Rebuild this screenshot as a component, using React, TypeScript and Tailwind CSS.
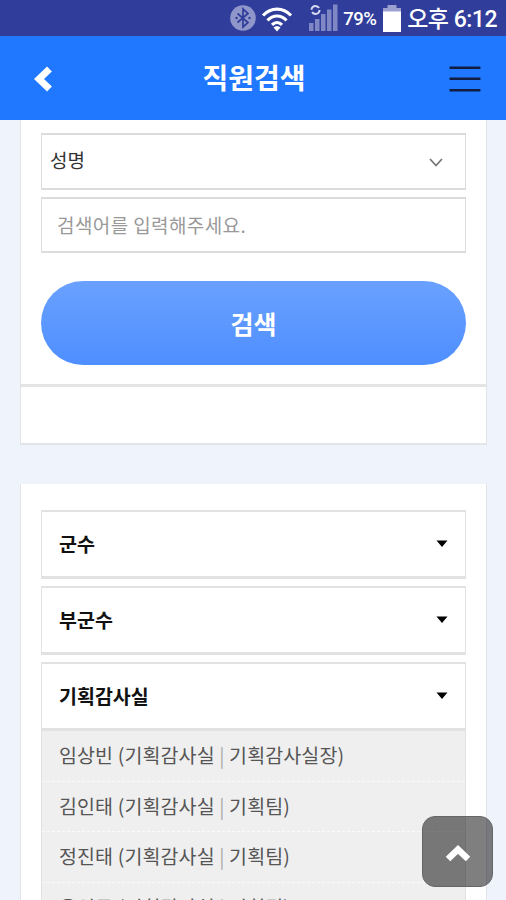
const departments = ['군수', '부군수', '기획감사실'];

const employees = [
  { name: '임상빈', dept: '기획감사실', team: '기획감사실장' },
  { name: '김인태', dept: '기획감사실', team: '기획팀' },
  { name: '정진태', dept: '기획감사실', team: '기획팀' },
  { name: '윤성국', dept: '기획감사실', team: '기획팀' },
];

const StatusBar = () => (
  <div className="h-9 shrink-0 bg-[#303d9b] flex items-center pr-[9px] justify-end text-white font-[Roboto,'Noto_Sans_CJK_KR',sans-serif]">
    <svg width="26" height="26" viewBox="0 0 26 26" className="mr-[5px]" aria-hidden="true">
      <circle cx="13" cy="13" r="12.8" fill="#8f97ca" />
      <path d="M7.500 8.500L18 17.500L13 22V4L18 8.500L7.500 17.500" fill="none" stroke="#303d9b" strokeWidth="1.700" />
      <circle cx="6.500" cy="13" r="1.200" fill="#303d9b" />
      <circle cx="19.500" cy="13" r="1.200" fill="#303d9b" />
    </svg>
    <svg width="32" height="26" viewBox="0 0 32 26" className="mr-[16px] mt-px" aria-hidden="true">
      <g fill="none" stroke="#fff" strokeWidth="3.200">
        <path d="M2 9.500C10 1 22 1 30 9.500" />
        <path d="M6.500 14.500C12 8.500 20 8.500 25.500 14.500" />
        <path d="M11 18.800C14 15.800 18 15.800 21 18.800" />
      </g>
      <path d="M12.500 21.500Q16 18.500 19.500 21.500L16 25.500z" fill="#fff" />
    </svg>
    <svg width="30" height="28" viewBox="0 0 30 28" className="mr-[4px]" aria-hidden="true">
      <g fill="#7f88c4">
        <rect x="0" y="19" width="4.500" height="8" />
        <rect x="6" y="15" width="4.500" height="12" />
        <rect x="12" y="10" width="4.500" height="17" />
        <rect x="18" y="5.500" width="4.500" height="21.500" />
        <rect x="24" y="0.500" width="4.500" height="26.500" />
      </g>
      <circle cx="6.500" cy="6" r="4" fill="none" stroke="#d8dcf2" strokeWidth="2" strokeDasharray="10 2.500" />
    </svg>
    <span className="w-[34px] text-[18.5px] font-medium leading-none tracking-[-0.5px] mr-[6px] mt-[3px]">79%</span>
    <svg width="18" height="27" viewBox="0 0 18 27" className="mr-[6px] mt-px" aria-hidden="true">
      <rect x="4.500" y="0" width="9" height="5" fill="#9aa1d0" />
      <rect x="0" y="3" width="18" height="4" fill="#9aa1d0" />
      <rect x="0" y="6.500" width="18" height="20.500" fill="#fff" />
    </svg>
    <span className="text-[23px] font-medium leading-none whitespace-nowrap tracking-[-0.5px] mt-[2px]">오후 6:12</span>
  </div>
);

const Header = () => (
  <header className="h-[84px] shrink-0 bg-[#1f78ff] flex items-center justify-between pl-[34px] pr-[25px]">
    <button aria-label="이전" className="mt-[2px]">
      <svg width="20" height="28" viewBox="0 0 20 28">
        <path d="M15.500 4L5 14L15.500 24" fill="none" stroke="#fff" strokeWidth="7" />
      </svg>
    </button>
    <h1 className="ml-[5px] -mt-[3px] text-[28px] leading-none font-bold text-white">직원검색</h1>
    <button aria-label="메뉴" className="mt-px">
      <svg width="32" height="28" viewBox="0 0 32 28">
        <path d="M1.500 2.700H30.500M1.500 13.700H30.500M1.500 25.200H30.500" stroke="#101c40" strokeWidth="2.400" strokeLinecap="round" />
      </svg>
    </button>
  </header>
);

const SearchForm = () => (
  <section className="h-[325px] shrink-0 bg-white border-x border-b-2 border-[#e2e4e8] flex flex-col">
    <div className="h-[267px] border-b-[3px] border-[#e4e4e4] px-5 pt-[13px]">
      <div className="h-[57px] border border-t-2 border-b-2 border-[#dcdcdc] flex items-center justify-between pl-2 pr-[21px]">
        <span className="text-[19px] leading-none text-[#333] -mt-[4px]">성명</span>
        <svg width="16" height="11" viewBox="0 0 16 11" className="mt-[2px]">
          <path d="M2 2L8 8.500L14 2" fill="none" stroke="#777" strokeWidth="1.800" />
        </svg>
      </div>
      <div className="mt-[7px] h-[56px] border border-t-2 border-b-2 border-[#dcdcdc] flex items-center pl-[15px] text-[19px] leading-none tracking-[0.4px] text-[#999]">
        <span className="-mt-[2px]">검색어를 입력해주세요.</span>
      </div>
      <button className="mt-[28px] w-full h-[84px] rounded-full bg-linear-to-b from-[#6aa1ff] to-[#4e8eff] text-[25px] leading-none font-bold text-white">
        검색
      </button>
    </div>
  </section>
);

const DepartmentList = () => (
  <section className="mt-[39px] grow bg-white border-x border-[#e2e4e8] px-5 pt-[26px]">
    <div className="flex flex-col gap-[7px]">
      {departments.map((name) => (
        <div
          key={name}
          className="h-[69px] border border-t-2 border-b-[3px] border-[#e2e2e2] flex items-center justify-between px-[17px]"
        >
          <span className="text-[19.5px] leading-none font-bold text-[#111]">{name}</span>
          <svg width="12" height="8" viewBox="0 0 12 8">
            <path d="M0.500 0.500H11.500L6 7z" fill="#000" />
          </svg>
        </div>
      ))}
    </div>
    <ul className="bg-[#efefef] border-x border-[#e2e2e2]">
      {employees.map(({ name, dept, team }) => (
        <li
          key={name}
          className="h-[50.5px] border-b border-dashed border-[#fafafa] pl-[17px] text-[19.5px] leading-[47px] tracking-[0.12px] text-[#555] whitespace-nowrap"
        >
          {name} ({dept} <span className="text-[#aaa]">|</span> {team})
        </li>
      ))}
    </ul>
  </section>
);

const App = () => (
  <div className="relative w-[506px] h-[900px] overflow-hidden bg-[#eff3fc] flex flex-col font-['Noto_Sans_CJK_KR',sans-serif]">
    <StatusBar />
    <Header />
    <main className="grow min-h-0 flex flex-col px-5 pr-[19px]">
      <SearchForm />
      <DepartmentList />
    </main>
    <button
      aria-label="맨 위로"
      className="absolute left-[422px] top-[816px] size-[71px] rounded-[13px] bg-black/50 border border-[#666] flex items-center justify-center"
    >
      <svg width="28" height="20" viewBox="0 0 28 20" className="mt-[4px]">
        <path d="M4 15L14 5.500L24 15" fill="none" stroke="#fff" strokeWidth="6.500" />
      </svg>
    </button>
  </div>
);

export default App;
